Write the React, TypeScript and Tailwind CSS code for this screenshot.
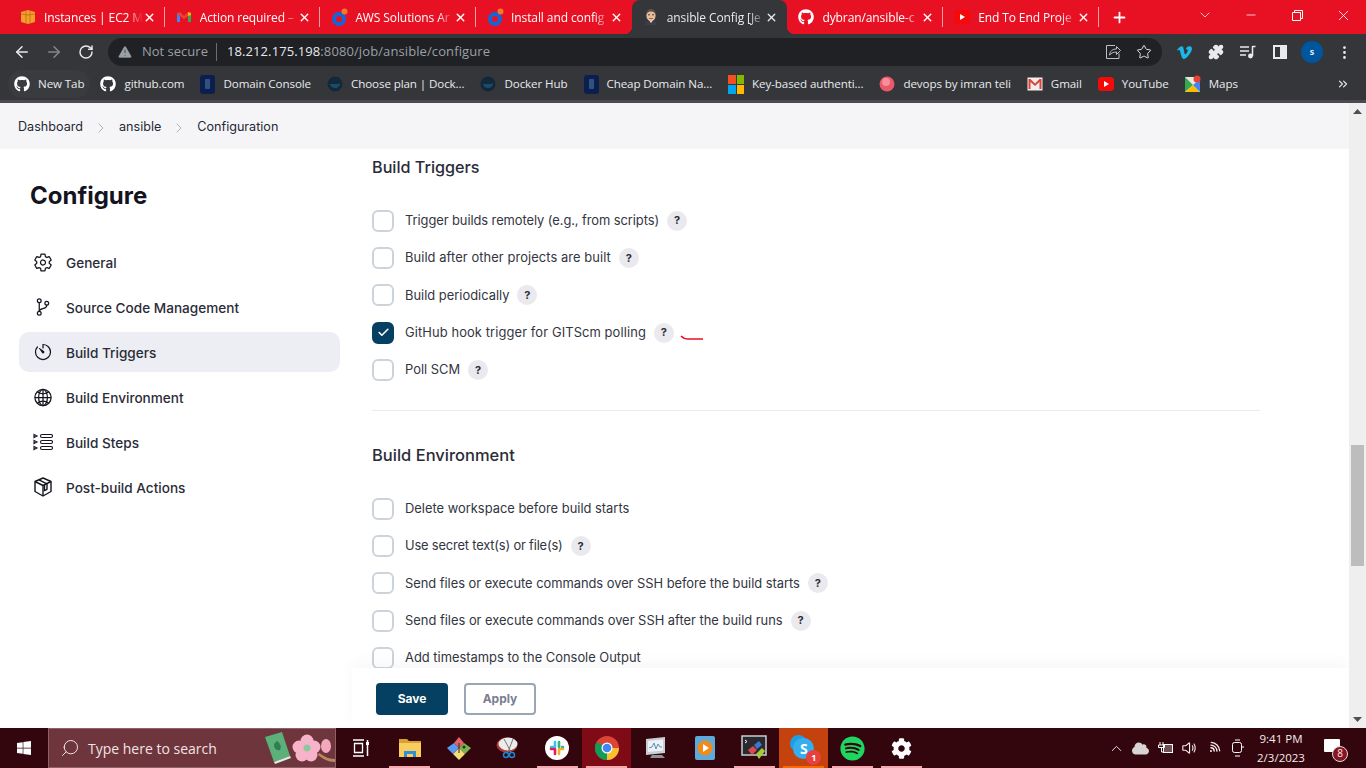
import {
  ArrowLeft,
  ArrowRight,
  ChevronDown,
  ChevronRight,
  ChevronUp,
  ChevronsRight,
  MoreVertical,
  Minus,
  Plus,
  RotateCw,
  Search,
  Star,
  TriangleAlert,
  X,
  Check,
  Puzzle,
} from "lucide-react";
import { FaGithub, FaVimeoV, FaWindows, FaSpotify, FaCog, FaCloud } from "react-icons/fa";
import { IoGitBranchOutline, IoGlobeOutline, IoSettingsOutline, IoTimerOutline, IoVolumeMediumOutline, IoWifi } from "react-icons/io5";

const uiFont = "font-['Open_Sans','Noto_Sans',sans-serif]";

function Ec2Icon() {
  return (
    <svg width="16" height="16" viewBox="0 0 16 16">
      <path d="M1 3l7-2 7 2v10l-7 2-7-2z" fill="#f59e2c" />
      <path d="M6 2v13M10 2v13M1 5l7 1 7-1" stroke="#b86f14" strokeWidth="0.8" fill="none" />
    </svg>
  );
}

function GmailIcon({ size = 16 }: { size?: number }) {
  return (
    <svg width={size} height={size} viewBox="0 0 16 16">
      <path d="M1 4v9h3V7z" fill="#4285f4" />
      <path d="M15 4v9h-3V7z" fill="#34a853" />
      <path d="M1 4l3-1 4 4 4-4 3 1-3 3-4 3-4-3z" fill="#ea4335" />
      <path d="M12 3l3 1v2l-3 1z" fill="#fbbc04" />
    </svg>
  );
}

function JiraDot() {
  return (
    <svg width="18" height="18" viewBox="0 0 18 18">
      <circle cx="8" cy="11" r="5" fill="none" stroke="#1565d8" strokeWidth="4" />
      <path d="M8 6h5v5" fill="#1565d8" />
      <circle cx="13.500" cy="3.500" r="3" fill="#f0792b" />
    </svg>
  );
}

function JenkinsFace() {
  return (
    <svg width="16" height="18" viewBox="0 0 16 18">
      <path d="M2 17c0-4 3-5 6-5s6 1 6 5z" fill="#3d3d48" />
      <path d="M6 12l2 3 2-3z" fill="#e8e8e8" />
      <ellipse cx="8" cy="7.500" rx="4.600" ry="5.800" fill="#e6bd9a" />
      <path d="M3.200 7C3 3 5.500 1 8 1s5 2 4.800 6C12 4.500 10 3.500 8 3.500S4 4.500 3.200 7z" fill="#5d5148" />
      <path d="M5 6.800h2M9 6.800h2" stroke="#3a2f29" strokeWidth="0.900" />
      <path d="M6 10.500h4" stroke="#a5553f" strokeWidth="0.900" />
    </svg>
  );
}

function YoutubeIcon() {
  return (
    <svg width="16" height="14" viewBox="0 0 16 14">
      <rect x="0" y="0" width="16" height="14" rx="3.500" fill="#f50a0a" />
      <path d="M6 4l5 3-5 3z" fill="#fff" />
    </svg>
  );
}

function DomainIcon() {
  return (
    <span className="flex h-[19px] w-[15px] items-center justify-center rounded-[3px] bg-[#0b1f4f]">
      <span className="h-[10px] w-[5px] rounded-[1px] bg-[#33517f]" />
    </span>
  );
}

function DockerIcon() {
  return (
    <svg width="16" height="16" viewBox="0 0 16 16">
      <circle cx="8" cy="8" r="7.500" fill="#12293b" />
      <path d="M3 8h8c1 0 1.500-1 2-1 0 3-2 5-5 5-3 0-5-2-5-4z" fill="#1d4a66" />
    </svg>
  );
}

function MicrosoftIcon() {
  return (
    <span className="grid h-[19px] w-[16px] grid-cols-2 gap-px">
      <span className="bg-[#f25022]" />
      <span className="bg-[#7fba00]" />
      <span className="bg-[#00a4ef]" />
      <span className="bg-[#ffb900]" />
    </span>
  );
}

function RubyIcon() {
  return (
    <svg width="16" height="18" viewBox="0 0 16 18">
      <circle cx="8" cy="9" r="7.500" fill="#e9586b" />
      <circle cx="7" cy="7" r="4" fill="#f58f9b" />
    </svg>
  );
}

function MailIcon() {
  return (
    <svg width="16" height="14" viewBox="0 0 16 14">
      <rect x="0.500" y="0.500" width="15" height="13" fill="#f4ecec" />
      <path d="M1.500 2v10h2V5l4.500 4 4.500-4v7h2V2h-2L8 6.500 3.500 2z" fill="#d5473b" />
    </svg>
  );
}

function MapsIcon() {
  return (
    <svg width="16" height="18" viewBox="0 0 16 18">
      <rect x="0" y="2" width="15" height="15" fill="#e8e6df" />
      <path d="M0 2l8 8-8 7z" fill="#34a853" />
      <path d="M0 17l8-7 7 7z" fill="#fbbc04" />
      <path d="M8 10l7-6v13z" fill="#4285f4" />
      <circle cx="12" cy="4" r="3.500" fill="#ea4335" />
    </svg>
  );
}

function ChromeIcon() {
  return (
    <svg width="24" height="24" viewBox="0 0 24 24">
      <circle cx="12" cy="12" r="12" fill="#db4437" />
      <path d="M12 12L1.600 6A12 12 0 0 0 12 24z" fill="#0f9d58" />
      <path d="M12 12h12A12 12 0 0 1 12 24z" fill="#fbc02d" />
      <circle cx="12" cy="12" r="5.500" fill="#fff" />
      <circle cx="12" cy="12" r="4.300" fill="#4285f4" />
    </svg>
  );
}

const tabs = [
  { title: "Instances | EC2 M", icon: <Ec2Icon /> },
  { title: "Action required –", icon: <GmailIcon /> },
  { title: "AWS Solutions Ar", icon: <JiraDot /> },
  { title: "Install and config", icon: <JiraDot /> },
  { title: "ansible Config [Je", icon: <JenkinsFace />, active: true },
  { title: "dybran/ansible-c", icon: <FaGithub size={16} className="text-white" /> },
  { title: "End To End Proje", icon: <YoutubeIcon /> },
];

const bookmarks = [
  { label: "New Tab", icon: <FaGithub size={16} className="text-white" />, hover: true },
  { label: "github.com", icon: <FaGithub size={16} className="text-white" /> },
  { label: "Domain Console", icon: <DomainIcon /> },
  { label: "Choose plan | Dock...", icon: <DockerIcon /> },
  { label: "Docker Hub", icon: <DockerIcon /> },
  { label: "Cheap Domain Na...", icon: <DomainIcon /> },
  { label: "Key-based authenti...", icon: <MicrosoftIcon /> },
  { label: "devops by imran teli", icon: <RubyIcon /> },
  { label: "Gmail", icon: <MailIcon /> },
  { label: "YouTube", icon: <YoutubeIcon /> },
  { label: "Maps", icon: <MapsIcon /> },
];

function TabStrip() {
  return (
    <div className={`flex h-[34px] items-stretch bg-[#e81123] pl-[9px] text-white ${uiFont}`}>
      {tabs.map((tab, i) => (
        <div
          key={tab.title}
          className={`relative flex w-[155.700px] items-center pl-[11px] pr-[9px] ${
            tab.active ? "rounded-t-[8px] bg-[#35363a] text-[#e8eaed]" : ""
          }`}
        >
          {tab.active && (
            <>
              <span className="absolute bottom-0 -left-[8px] h-[8px] w-[8px] bg-[radial-gradient(circle_at_0_0,transparent_8px,#35363a_8.500px)]" />
              <span className="absolute -right-[8px] bottom-0 h-[8px] w-[8px] bg-[radial-gradient(circle_at_100%_0,transparent_8px,#35363a_8.500px)]" />
            </>
          )}
          <span className="flex w-[24px] shrink-0 items-center">{tab.icon}</span>
          <span className="w-[101px] overflow-hidden pt-[2px] text-[12px] tracking-[-0.1px] whitespace-nowrap [mask-image:linear-gradient(to_right,black_84%,transparent)]">
            {tab.title}
          </span>
          <X size={13} strokeWidth={2.5} className="ml-auto shrink-0" />
          {!tab.active && i !== 3 && (
            <span className="absolute top-[7px] right-0 h-[20px] w-px bg-[#f8a0a8]" />
          )}
        </div>
      ))}
      <div className="ml-[12px] flex items-center">
        <Plus size={17} strokeWidth={2.5} />
      </div>
      <div className="ml-auto flex items-start">
        <span className="flex h-[30px] w-[46px] items-center justify-center">
          <ChevronDown size={16} strokeWidth={1.100} />
        </span>
        <span className="flex h-[30px] w-[46px] items-center justify-center">
          <Minus size={14} strokeWidth={1.300} />
        </span>
        <span className="flex h-[30px] w-[46px] items-center justify-center">
          <svg width="11" height="11" viewBox="0 0 11 11" fill="none" stroke="#fff">
            <path d="M0.500 2.500h8v8h-8zM2.500 2.500v-2h8v8h-2" />
          </svg>
        </span>
        <span className="flex h-[30px] w-[46px] items-center justify-center">
          <X size={17} strokeWidth={1.200} />
        </span>
      </div>
    </div>
  );
}

function ShareIcon() {
  return (
    <svg width="16" height="16" viewBox="0 0 16 16" fill="none" stroke="#bdc1c6" strokeWidth="1">
      <path d="M10 1.500h-8.500v13h12.500v-5" />
      <path d="M4.500 11c.5-4 3-6 7-6V2.500l4 4-4 4V8c-3 0-5 1-7 3z" />
    </svg>
  );
}

function AddressBar() {
  const slot = "flex w-[32px] shrink-0 items-center justify-center";
  return (
    <div className={`flex h-[34px] items-center bg-[#35363a] pt-[2px] pl-[13px] text-[#e8eaed] ${uiFont}`}>
      <ArrowLeft size={18} strokeWidth={2} />
      <ArrowRight size={18} strokeWidth={2} className="ml-[14px] text-[#85878a]" />
      <RotateCw size={16} strokeWidth={2.2} className="ml-[15px]" />
      <div className="ml-[14px] flex h-[28px] w-[1054px] items-center rounded-full bg-[#202124] pl-[9px]">
        <TriangleAlert size={16} fill="#9aa0a6" stroke="#202124" strokeWidth={1} />
        <span className="ml-[9px] text-[13px] text-[#9aa0a6]">Not secure</span>
        <span className="mr-[10px] ml-[8px] h-[18px] w-px bg-[#6b6d70]" />
        <span className="text-[13px] tracking-[0.1px]">18.212.175.198</span>
        <span className="text-[13px] tracking-[0.1px] text-[#9aa0a6]">:8080/job/ansible/configure</span>
        <span className="ml-auto flex items-center gap-[15px] pr-[10px]">
          <ShareIcon />
          <Star size={16} strokeWidth={1.500} className="text-[#dfe1e5]" />
        </span>
      </div>
      <div className="ml-[6px] flex items-center">
        <span className={slot}>
          <FaVimeoV size={17} className="text-[#1ab7ea]" />
        </span>
        <span className={slot}>
          <Puzzle size={16} fill="#e8eaed" />
        </span>
        <span className={slot}>
          <svg width="16" height="14" viewBox="0 0 16 14" fill="none" stroke="#e8eaed" strokeWidth="1.500">
            <path d="M0 2h9M0 6h9M0 10h6M12.500 1v10" />
            <circle cx="10.500" cy="11" r="1.700" fill="#e8eaed" />
            <path d="M12.500 1.500h3" />
          </svg>
        </span>
        <span className={slot}>
          <span className="flex h-[14px] w-[14px] justify-end border-2 border-[#e8eaed]">
            <span className="h-full w-[5px] bg-[#e8eaed]" />
          </span>
        </span>
        <span className={slot}>
          <span className="flex h-[22px] w-[22px] items-center justify-center rounded-full bg-[#00569e] text-[9px] font-bold">
            s
          </span>
        </span>
        <span className={slot}>
          <MoreVertical size={17} />
        </span>
      </div>
    </div>
  );
}

function BookmarkBar() {
  return (
    <div className={`flex h-[32px] items-center gap-[16px] bg-[#35363a] pl-[14px] text-[11.600px] text-[#e8eaed] ${uiFont}`}>
      {bookmarks.map((b) => (
        <div key={b.label} className="relative flex items-center gap-[8px] tracking-[-0.1px] whitespace-nowrap">
          {b.hover && <span className="absolute -inset-x-[6px] -inset-y-[5px] rounded-full bg-[#3a3b3f]" />}
          <span className="relative">{b.icon}</span>
          <span className="relative">{b.label}</span>
        </div>
      ))}
      <ChevronsRight size={14} className="mr-[16px] ml-auto" />
    </div>
  );
}

function Breadcrumbs() {
  return (
    <div className="flex h-[46px] shrink-0 items-center bg-[#f5f5f8] pt-[3px] pl-[18px] text-[12.600px] text-[#1f2933]">
      <span>Dashboard</span>
      <ChevronRight size={16} strokeWidth={1} className="mx-[10px] text-[#8b8f9c]" />
      <span>ansible</span>
      <ChevronRight size={16} strokeWidth={1} className="mx-[10px] text-[#8b8f9c]" />
      <span>Configuration</span>
    </div>
  );
}

function StepsIcon() {
  return (
    <svg width="20" height="20" viewBox="0 0 20 20" fill="none" stroke="#14141f" strokeWidth="1.100">
      <rect x="7.500" y="2.500" width="12" height="3" rx="1.500" />
      <rect x="7.500" y="8.500" width="12" height="3" rx="1.500" />
      <rect x="7.500" y="14.500" width="12" height="3" rx="1.500" />
      <path d="M1 2.500l3 1.500-3 1.500zM1 8.500l3 1.500-3 1.500zM1 14.500l3 1.500-3 1.500z" />
    </svg>
  );
}

function PackageIcon() {
  return (
    <svg width="20" height="20" viewBox="0 0 20 20" fill="none" stroke="#14141f" strokeWidth="1.400" strokeLinejoin="round">
      <path d="M10 1l8 3.500v10L10 19l-8-4.500v-10z" />
      <path d="M2 4.500L10 8.500l8-4M10 8.500V19" />
      <path d="M6 2.800l8 4v5.500l-2.500 1.300V8" />
    </svg>
  );
}

const navItems = [
  { label: "General", icon: <IoSettingsOutline size={23} /> },
  { label: "Source Code Management", icon: <IoGitBranchOutline size={22} /> },
  { label: "Build Triggers", icon: <IoTimerOutline size={22} />, active: true },
  { label: "Build Environment", icon: <IoGlobeOutline size={23} /> },
  { label: "Build Steps", icon: <StepsIcon /> },
  { label: "Post-build Actions", icon: <PackageIcon /> },
];

function Sidebar() {
  return (
    <aside className="w-[372px] shrink-0 pt-[30px] pl-[19px] text-[#14141f]">
      <h1 className="pl-[11px] text-[24px] leading-[34px] font-bold">Configure</h1>
      <nav className="mt-[29px] w-[321px]">
        {navItems.map((item) => (
          <div
            key={item.label}
            className={`mb-[5px] flex h-[40px] items-center gap-[13px] rounded-[10px] pl-[14px] text-[13.600px] font-medium text-[#2a2c38] ${
              item.active ? "bg-[#edeef3]" : ""
            }`}
          >
            <span className="flex w-[20px] justify-center text-[#14141f]">{item.icon}</span>
            <span className="pt-[2px]">{item.label}</span>
          </div>
        ))}
      </nav>
    </aside>
  );
}

function Option({
  label,
  help,
  checked,
  spacing = "",
}: {
  label: string;
  help?: boolean;
  checked?: boolean;
  spacing?: string;
}) {
  return (
    <div className="flex h-[37.300px] items-center text-[12.900px] text-[#333642]">
      <span
        className={`flex h-[22px] w-[22px] items-center justify-center rounded-[6px] border-2 ${
          checked ? "border-[#053f62] bg-[#053f62]" : "border-[#ccd3da] bg-white"
        }`}
      >
        {checked && <Check size={13} strokeWidth={3} className="text-white" />}
      </span>
      <span className={`ml-[11px] ${spacing}`}>{label}</span>
      {help && (
        <span className="ml-[8px] flex h-[20px] w-[20px] items-center justify-center rounded-full bg-[#e9e9ee] text-[11px] font-bold text-[#2a2c38]">
          ?
        </span>
      )}
    </div>
  );
}

function Content() {
  return (
    <div className="w-[888px] pt-[6px]">
      <h2 className="text-[16.200px] leading-[24px] font-medium text-[#2a2c38]">Build Triggers</h2>
      <div className="mt-[23px]">
        <Option label="Trigger builds remotely (e.g., from scripts)" help spacing="tracking-[-0.07px]" />
        <Option label="Build after other projects are built" help spacing="tracking-[0.08px]" />
        <Option label="Build periodically" help />
        <div className="relative">
          <Option label="GitHub hook trigger for GITScm polling" help checked spacing="tracking-[0.11px]" />
          {/* red pen mark from the screenshot */}
          <svg className="absolute top-[21px] left-[308px]" width="24" height="8" viewBox="0 0 24 8" fill="none">
            <path d="M1 1c2 2 4 3 7 3h15" stroke="#e81123" strokeWidth="1.500" />
          </svg>
        </div>
        <Option label="Poll SCM" help />
      </div>
      <div className="mt-[22px] h-px bg-[#e9e9ee]" />
      <h2 className="mt-[32px] text-[16.500px] leading-[24px] font-medium text-[#2a2c38]">Build Environment</h2>
      <div className="mt-[22.500px]">
        <Option label="Delete workspace before build starts" />
        <Option label="Use secret text(s) or file(s)" help spacing="tracking-[-0.18px]" />
        <Option label="Send files or execute commands over SSH before the build starts" help spacing="tracking-[-0.03px]" />
        <Option label="Send files or execute commands over SSH after the build runs" help />
        <Option label="Add timestamps to the Console Output" />
      </div>
    </div>
  );
}

function SaveBar() {
  return (
    <div className="absolute right-0 bottom-0 left-[352px] h-[60px] bg-white/95 pt-[15px] pl-[24px] shadow-[0_-6px_14px_rgba(0,0,0,0.03)]">
      <div className="flex gap-[16px] text-[12px] font-bold">
        <button className="h-[32px] w-[72px] rounded-[4px] bg-[#053f62] text-white">Save</button>
        <button className="h-[32px] w-[72px] rounded-[4px] border-2 border-[#9aa6b2] bg-white text-[#7a7d92]">Apply</button>
      </div>
    </div>
  );
}

function Scrollbar() {
  return (
    <div className="flex w-[17px] shrink-0 flex-col items-center bg-[#efefef]">
      <svg className="mt-[6px] shrink-0" width="9" height="5" viewBox="0 0 9 5">
        <path d="M4.500 0L9 5H0z" fill="#505050" />
      </svg>
      <div className="mt-[331px] h-[121px] w-[13px] shrink-0 bg-[#bdbdbd]" />
      <svg className="mt-auto mb-[6px] shrink-0" width="9" height="5" viewBox="0 0 9 5">
        <path d="M4.500 5L9 0H0z" fill="#505050" />
      </svg>
    </div>
  );
}

function SearchArt() {
  return (
    <svg width="72" height="38" viewBox="0 0 72 38">
      <path d="M2 8l17-5 8 24-16 6z" fill="#5cb07a" />
      <path d="M11 33l16-6 1 2-16 6z" fill="#dfeee2" />
      <path d="M14 12c3 2 5 5 3 9-4 1-6-2-6-5 0-2 2-3 3-4z" fill="#2f7f50" />
      <g fill="#f7b3c9">
        <circle cx="44" cy="12" r="6.500" />
        <circle cx="51" cy="18" r="6.500" />
        <circle cx="48" cy="26" r="6.500" />
        <circle cx="39" cy="26" r="6.500" />
        <circle cx="36" cy="18" r="6.500" />
      </g>
      <circle cx="44" cy="19" r="3.500" fill="#8fc79a" />
      <path d="M56 24c5 3 9 6 16 6v3c-7 0-12-3-17-7z" fill="#b98a5f" />
      <ellipse cx="63" cy="17" rx="5" ry="7" fill="#f4a8bd" />
    </svg>
  );
}

function TaskView() {
  return (
    <svg width="18" height="18" viewBox="0 0 18 18" fill="none" stroke="#fff" strokeWidth="1.300">
      <path d="M1 1h11M1 17h11M2.500 4.500h8v9h-8z" />
      <path d="M15.500 1v2M15.500 6v11" strokeWidth="1.500" />
      <rect x="14" y="3" width="3" height="3" fill="#fff" stroke="none" />
    </svg>
  );
}

function FolderIcon() {
  return (
    <svg width="22" height="20" viewBox="0 0 22 20">
      <path d="M0 1h8l2 2h12v15H0z" fill="#d9a032" />
      <rect x="0" y="5" width="22" height="14" fill="#f8ce5e" />
      <path d="M5 19v-6h12v6h-3v-3H8v3z" fill="#2f8fd8" />
    </svg>
  );
}

function GitIcon() {
  return (
    <svg width="26" height="26" viewBox="0 0 26 26">
      <path d="M13 13L8 8l5-6 5 6z" fill="#e4626b" />
      <path d="M13 13l5-5 7 5-6 6z" fill="#7ab34f" />
      <path d="M13 13l6 6-6 6-6-6z" fill="#f3de75" />
      <path d="M13 13l-6 6-6-6 7-5z" fill="#5b9bef" />
      <circle cx="18" cy="12" r="1.500" fill="#203a12" />
      <path d="M13 8v10" stroke="#3a2020" />
    </svg>
  );
}

function SnipIcon() {
  return (
    <svg width="24" height="24" viewBox="0 0 24 24">
      <ellipse cx="11" cy="9" rx="10.500" ry="7.500" fill="#a83a3c" />
      <ellipse cx="12" cy="8" rx="9.500" ry="6.500" fill="#ececec" />
      <path d="M8 3l7 13M17 3L12 16" stroke="#777" strokeWidth="1" />
      <circle cx="16" cy="19" r="2.500" fill="none" stroke="#1d86d0" strokeWidth="1.500" />
      <circle cx="10" cy="19" r="2.500" fill="none" stroke="#1d86d0" strokeWidth="1.500" />
    </svg>
  );
}

function SlackIcon() {
  return (
    <svg width="24" height="24" viewBox="0 0 24 24" strokeLinecap="round" strokeWidth="2.600">
      <circle cx="12" cy="12" r="12" fill="#fff" />
      <path d="M10 6v5M6 11h2" stroke="#36c5f0" />
      <path d="M14 6v5M18 11h-1" stroke="#2eb67d" />
      <path d="M14 18v-5M18 13h-2" stroke="#ecb22e" />
      <path d="M10 18v-5M6 13h2" stroke="#e01e5a" />
    </svg>
  );
}

function MonitorIcon() {
  return (
    <svg width="24" height="24" viewBox="0 0 24 24">
      <path d="M2 3l19-2v16l-19 2z" fill="#c9ced3" />
      <path d="M4 5l15-1.500v11L4 16z" fill="#eef1f4" />
      <path d="M5 12l3-1 2-4 2 6 2-5 2 3h2" fill="none" stroke="#5b8fc0" strokeWidth="1" />
      <path d="M8 19h10l3 3H6z" fill="#8e9398" />
    </svg>
  );
}

function MediaIcon() {
  return (
    <svg width="20" height="24" viewBox="0 0 20 24">
      <rect x="0" y="0" width="20" height="24" rx="2" fill="#5fa9d8" />
      <circle cx="10" cy="12" r="7.500" fill="#f28a1a" />
      <path d="M8 8l6 4-6 4z" fill="#fff" />
    </svg>
  );
}

function TerminalIcon() {
  return (
    <svg width="26" height="26" viewBox="0 0 26 26">
      <rect x="1" y="1" width="24" height="19" fill="#2a2a2e" stroke="#c9ced3" strokeWidth="1.500" />
      <path d="M4 5l2 1.500L4 8" stroke="#fff" fill="none" />
      <path d="M7 15l5-4 4 4-5 5z" fill="#dc4a4e" />
      <path d="M13 10l5-4 3 4-5 4z" fill="#3a78d0" />
      <path d="M15 19l6-6 3 3-6 8z" fill="#a8c93a" />
    </svg>
  );
}

function SkypeIcon() {
  return (
    <span className="relative flex h-[26px] w-[26px]">
      <span className="absolute top-0 left-0 h-[17px] w-[17px] rounded-full bg-[#1f9fe3]" />
      <span className="absolute top-[3px] left-[3px] flex h-[21px] w-[21px] items-center justify-center rounded-full bg-[#35aef0] text-[14px] font-bold text-white">
        S
      </span>
      <span className="absolute -right-[5px] -bottom-[4px] flex h-[15px] w-[15px] items-center justify-center rounded-full bg-[#e8403c] text-[9px] font-bold">
        1
      </span>
    </span>
  );
}

const taskItems = [
  { key: "view", icon: <TaskView /> },
  { key: "files", icon: <FolderIcon />, open: true },
  { key: "git", icon: <GitIcon /> },
  { key: "snip", icon: <SnipIcon /> },
  { key: "slack", icon: <SlackIcon />, open: true },
  { key: "chrome", icon: <ChromeIcon />, open: true, active: "bg-[#7e0b16]" },
  { key: "monitor", icon: <MonitorIcon /> },
  { key: "media", icon: <MediaIcon /> },
  { key: "terminal", icon: <TerminalIcon />, open: true },
  { key: "skype", icon: <SkypeIcon />, open: true, active: "bg-[#c4420e]", bar: "bg-[#ff6a00]" },
  { key: "spotify", icon: <FaSpotify size={25} className="text-[#1ed760]" />, open: true },
  { key: "settings", icon: <FaCog size={21} />, open: true },
];

function TaskIcons() {
  return (
    <div className="flex h-full items-stretch">
      {taskItems.map((t) => (
        <div key={t.key} className={`relative flex w-[49.200px] items-center justify-center ${t.active ?? ""}`}>
          {t.icon}
          {t.open && <span className={`absolute bottom-0 left-[4px] h-[2px] w-[41px] ${t.bar ?? "bg-[#f5a7ad]"}`} />}
        </div>
      ))}
    </div>
  );
}

function Tray() {
  const slot = "flex w-[24.300px] shrink-0 items-center justify-center";
  return (
    <div className="ml-auto flex items-center pr-[26px] text-[#f5eaea]">
      <span className={slot}>
        <ChevronUp size={17} strokeWidth={1.300} />
      </span>
      <span className={slot}>
        <FaCloud size={17} className="text-[#d8d3d4]" />
      </span>
      <span className={slot}>
        <svg width="16" height="14" viewBox="0 0 16 14" fill="none" stroke="#fff">
          <path d="M3 1v3M6 1v3M1.500 4h6v2.500H1.500zM4.500 6.500V11h2" />
          <rect x="6.500" y="3.500" width="9" height="8" fill="#fff" fillOpacity="0.3" />
        </svg>
      </span>
      <span className={slot}>
        <IoVolumeMediumOutline size={18} />
      </span>
      <span className={slot}>
        <IoWifi size={16} className="rotate-45" />
      </span>
      <span className={slot}>
        <svg width="13" height="18" viewBox="0 0 13 18" fill="none" stroke="#fff">
          <rect x="1.500" y="3.500" width="9" height="10" rx="2" />
          <path d="M4 1h5M4 17h5M10.500 8H13" />
        </svg>
      </span>
      <div className="w-[62px] text-center text-[11.500px]">
        <div className="h-[17px] leading-[17px]">9:41 PM</div>
        <div className="mt-[2px] h-[17px] leading-[17px]">2/3/2023</div>
      </div>
      <span className="relative ml-[12px] -translate-y-[3px]">
        <span className="block h-[13px] w-[16px] rounded-[1px] bg-white" />
        <span className="absolute -right-[8px] -bottom-[10px] flex h-[16px] w-[16px] items-center justify-center rounded-full border border-[#ddd] bg-[#8a1522] text-[10px]">
          8
        </span>
      </span>
    </div>
  );
}

function Taskbar() {
  return (
    <div className={`flex h-[40px] shrink-0 items-center bg-[#33060e] text-white ${uiFont}`}>
      <div className="flex w-[48px] justify-center">
        <FaWindows size={16} />
      </div>
      <div className="flex h-[40px] w-[288px] items-center border border-[#8d6166] bg-[#6e353c] pl-[11px] text-[14px] text-[#f1e4e5]">
        <Search size={20} strokeWidth={1.200} className="-scale-x-100" />
        <span className="ml-[8px]">Type here to search</span>
        <span className="ml-auto flex items-center">
          <SearchArt />
        </span>
      </div>
      <TaskIcons />
      <Tray />
    </div>
  );
}

export default function App() {
  return (
    <div className="flex h-screen flex-col overflow-hidden bg-white font-['Inter',sans-serif]">
      <TabStrip />
      <AddressBar />
      <BookmarkBar />
      <div className="h-[3px] shrink-0 bg-[#4a4a4f]" />
      <div className="flex min-h-0 flex-1">
        <div className="flex min-w-0 flex-1 flex-col">
          <Breadcrumbs />
          <div className="relative flex min-h-0 flex-1 overflow-hidden">
            <Sidebar />
            <Content />
            <SaveBar />
          </div>
        </div>
        <Scrollbar />
      </div>
      <Taskbar />
    </div>
  );
}
